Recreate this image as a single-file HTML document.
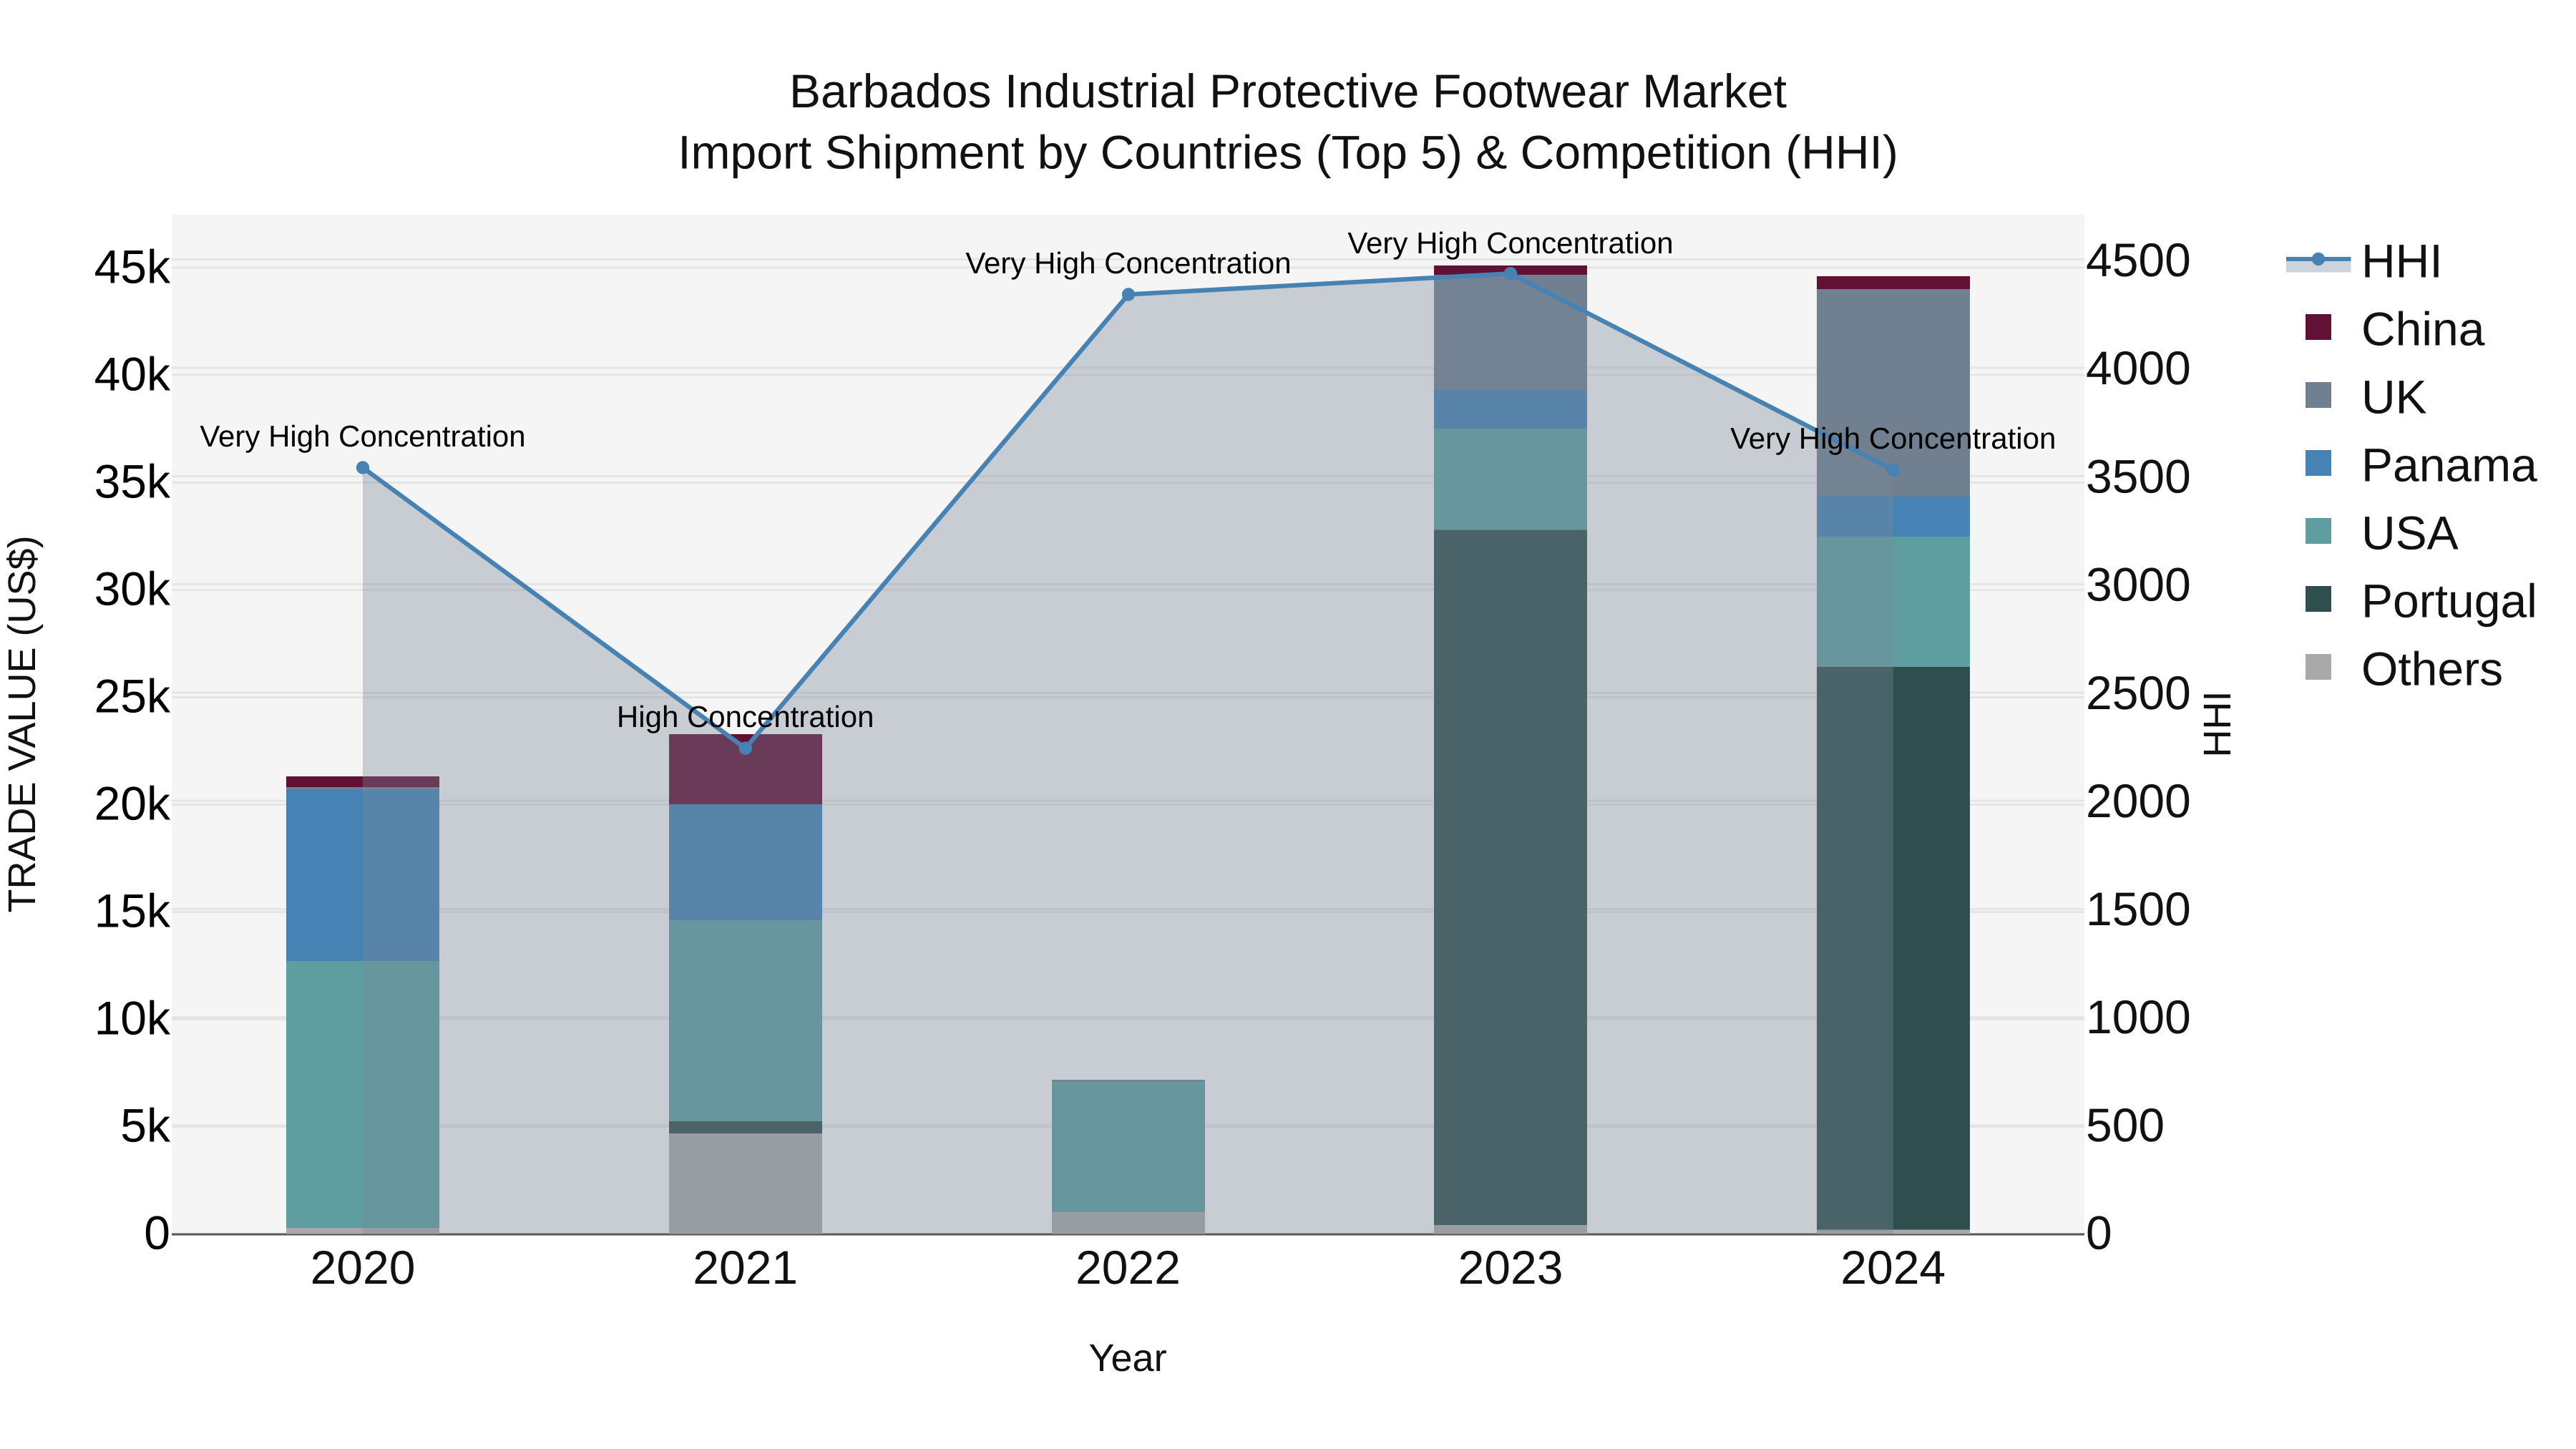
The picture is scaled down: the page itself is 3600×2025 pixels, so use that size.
<!DOCTYPE html>
<html>
<head>
<meta charset="utf-8">
<style>
html,body{margin:0;padding:0;background:#fff;width:3600px;height:2025px;overflow:hidden}
svg{display:block}
text{font-family:"Liberation Sans",Arial,sans-serif;fill:#111;text-rendering:geometricPrecision}
.t{font-size:66px}
.a{font-size:42px;fill:#000;text-anchor:middle}
.l{font-size:66px;text-anchor:end;fill:#000}
.r{font-size:66px}
.x{font-size:66px;text-anchor:middle}
.g{font-size:54px;text-anchor:middle}
</style>
</head>
<body>
<svg width="3600" height="2025" viewBox="0 0 3600 2025" xmlns="http://www.w3.org/2000/svg">
<rect width="3600" height="2025" fill="#fff"/>
<rect x="240" y="300" width="2673" height="1425" fill="#f5f5f5"/>

<!-- gridlines -->
<g stroke="#e5e5e5" stroke-width="3">
<path d="M240 374H2913M240 524H2913M240 674.500H2913M240 824.500H2913M240 974.500H2913M240 1124.500H2913M240 1274.500H2913M240 1424.500H2913M240 1574.500H2913"/>
<path d="M240 362.500H2913M240 514H2913M240 665.500H2913M240 816.500H2913M240 968H2913M240 1119H2913M240 1270.500H2913M240 1421.500H2913M240 1573H2913"/>
</g>
<rect x="240" y="1723.500" width="2673" height="3" fill="#555"/>

<!-- bars -->
<g>
<!-- 2020 -->
<rect x="400" y="1085" width="214" height="15" fill="#611134"/>
<rect x="400" y="1100" width="214" height="3.500" fill="#708090"/>
<rect x="400" y="1103.500" width="214" height="239.500" fill="#4682b4"/>
<rect x="400" y="1343" width="214" height="373" fill="#5f9ea0"/>
<rect x="400" y="1716" width="214" height="8.500" fill="#a9a9a9"/>
<!-- 2021 -->
<rect x="935" y="1026" width="214" height="98" fill="#611134"/>
<rect x="935" y="1124" width="214" height="162" fill="#4682b4"/>
<rect x="935" y="1286" width="214" height="281" fill="#5f9ea0"/>
<rect x="935" y="1567" width="214" height="17" fill="#2f4f4f"/>
<rect x="935" y="1584" width="214" height="140.500" fill="#a9a9a9"/>
<!-- 2022 -->
<rect x="1470" y="1509" width="214" height="2.500" fill="#708090"/>
<rect x="1470" y="1511.500" width="214" height="182.500" fill="#5f9ea0"/>
<rect x="1470" y="1694" width="214" height="30.500" fill="#a9a9a9"/>
<!-- 2023 -->
<rect x="2004" y="371" width="214" height="13" fill="#611134"/>
<rect x="2004" y="384" width="214" height="161" fill="#708090"/>
<rect x="2004" y="545" width="214" height="54" fill="#4682b4"/>
<rect x="2004" y="599" width="214" height="141.500" fill="#5f9ea0"/>
<rect x="2004" y="740.500" width="214" height="971.500" fill="#2f4f4f"/>
<rect x="2004" y="1712" width="214" height="12.500" fill="#a9a9a9"/>
<!-- 2024 -->
<rect x="2539" y="386" width="214" height="18" fill="#611134"/>
<rect x="2539" y="404" width="214" height="289.500" fill="#708090"/>
<rect x="2539" y="693.500" width="214" height="56.500" fill="#4682b4"/>
<rect x="2539" y="750" width="214" height="182" fill="#5f9ea0"/>
<rect x="2539" y="932" width="214" height="786.500" fill="#2f4f4f"/>
<rect x="2539" y="1718.500" width="214" height="6" fill="#a9a9a9"/>
</g>

<!-- HHI area + line -->
<path d="M507 653.500L1041.700 1045.700L1577 411.500L2111 382.300L2645.700 656.700V1724.500H507Z" fill="rgb(122,136,153)" fill-opacity="0.36"/>
<path d="M507 653.500L1041.700 1045.700L1577 411.500L2111 382.300L2645.700 656.700" fill="none" stroke="#4682b4" stroke-width="6.300" stroke-linejoin="round"/>
<g fill="#4682b4">
<circle cx="507" cy="653.500" r="9.200"/>
<circle cx="1041.700" cy="1045.700" r="9.200"/>
<circle cx="1577" cy="411.500" r="9.200"/>
<circle cx="2111" cy="382.300" r="9.200"/>
<circle cx="2645.700" cy="656.700" r="9.200"/>
</g>

<!-- annotations -->
<text class="a" x="507" y="624">Very High Concentration</text>
<text class="a" x="1041.700" y="1016">High Concentration</text>
<text class="a" x="1577" y="382">Very High Concentration</text>
<text class="a" x="2111" y="354">Very High Concentration</text>
<text class="a" x="2645.700" y="627">Very High Concentration</text>

<!-- title -->
<text class="t" x="1800" y="150" text-anchor="middle">Barbados Industrial Protective Footwear Market</text>
<text class="t" x="1800" y="235.500" text-anchor="middle">Import Shipment by Countries (Top 5) &amp; Competition (HHI)</text>

<!-- left ticks -->
<text class="l" x="238" y="395.500">45k</text>
<text class="l" x="238" y="545.500">40k</text>
<text class="l" x="238" y="695.500">35k</text>
<text class="l" x="238" y="845.500">30k</text>
<text class="l" x="238" y="995.500">25k</text>
<text class="l" x="238" y="1145.500">20k</text>
<text class="l" x="238" y="1295.500">15k</text>
<text class="l" x="238" y="1445.500">10k</text>
<text class="l" x="238" y="1595.500">5k</text>
<text class="l" x="238" y="1745.500">0</text>

<!-- right ticks -->
<text class="r" x="2915" y="386">4500</text>
<text class="r" x="2915" y="537">4000</text>
<text class="r" x="2915" y="688.500">3500</text>
<text class="r" x="2915" y="839.500">3000</text>
<text class="r" x="2915" y="991">2500</text>
<text class="r" x="2915" y="1142">2000</text>
<text class="r" x="2915" y="1293">1500</text>
<text class="r" x="2915" y="1444">1000</text>
<text class="r" x="2915" y="1595">500</text>
<text class="r" x="2915" y="1745.500">0</text>

<!-- x ticks -->
<text class="x" x="507" y="1794">2020</text>
<text class="x" x="1041.700" y="1794">2021</text>
<text class="x" x="1576.500" y="1794">2022</text>
<text class="x" x="2111" y="1794">2023</text>
<text class="x" x="2645.700" y="1794">2024</text>

<!-- axis titles -->
<text class="g" x="1576" y="1916">Year</text>
<text class="g" transform="translate(49,1012) rotate(-90)" x="0" y="0">TRADE VALUE (US$)</text>
<text class="g" transform="translate(3117,1012) rotate(-90)" x="0" y="0">HHI</text>

<!-- legend -->
<rect x="3195" y="362" width="90.500" height="18.500" fill="#ccd3db"/>
<rect x="3195" y="359" width="90.500" height="6" fill="#4682b4"/>
<circle cx="3240" cy="362" r="9.200" fill="#4682b4"/>
<rect x="3222" y="439" width="36" height="36" fill="#611134"/>
<rect x="3222" y="534" width="36" height="36" fill="#708090"/>
<rect x="3222" y="629" width="36" height="36" fill="#4682b4"/>
<rect x="3222" y="724" width="36" height="36" fill="#5f9ea0"/>
<rect x="3222" y="819" width="36" height="36" fill="#2f4f4f"/>
<rect x="3222" y="914" width="36" height="36" fill="#a9a9a9"/>
<text class="r" x="3300" y="387.700">HHI</text>
<text class="r" x="3300" y="482.700">China</text>
<text class="r" x="3300" y="577.700">UK</text>
<text class="r" x="3300" y="672.700">Panama</text>
<text class="r" x="3300" y="767.700">USA</text>
<text class="r" x="3300" y="862.700">Portugal</text>
<text class="r" x="3300" y="957.700">Others</text>
</svg>
</body>
</html>
